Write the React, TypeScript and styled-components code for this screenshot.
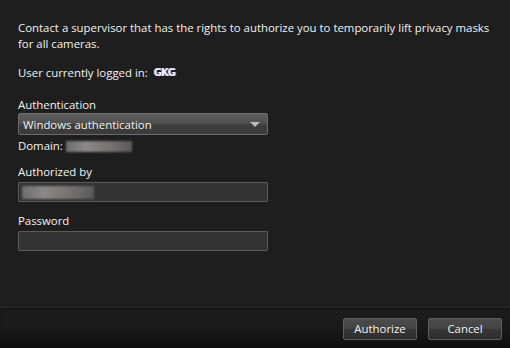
import React from 'react';
import styled, { createGlobalStyle } from 'styled-components';

const GlobalStyle = createGlobalStyle`
    html, body {
        margin: 0;
        padding: 0;
        background: #1e1e1e;
    }
    body {
        font-family: 'Open Sans', 'Noto Sans', 'Liberation Sans', sans-serif;
        font-size: 11.4px;
        color: #f2f2f2;
    }
`;

const Dialog = styled.div`
    width: 510px;
    height: 348px;
    display: flex;
    flex-direction: column;
    background: #1e1e1e;
    overflow: hidden;
`;

const Body = styled.div`
    flex: 1;
    display: flex;
    flex-direction: column;
    padding: 20px 18px 0 18px;
`;

const Intro = styled.p`
    margin: 0;
    line-height: 16px;
`;

const LoggedRow = styled.div`
    margin-top: 13px;
    line-height: 16px;
    display: flex;
    align-items: center;
    gap: 6px;
`;

const Scrambled = styled.span`
    font-family: 'DejaVu Sans', sans-serif;
    font-size: 10px;
    font-weight: bold;
    color: #f4f4ff;
    letter-spacing: -1px;
    text-shadow: 1px 0 0 rgba(110, 110, 255, 0.6), -1px 0 0 rgba(200, 140, 70, 0.5);
`;

const Field = styled.div<{ $top: number }>`
    margin-top: ${p => p.$top}px;
    display: flex;
    flex-direction: column;
`;

const Label = styled.label<{ $gap?: number }>`
    line-height: 16px;
    margin-bottom: ${p => p.$gap ?? 2}px;
`;

const Select = styled.div`
    box-sizing: border-box;
    width: 250px;
    height: 22px;
    border: 1px solid #6c6c6c;
    border-radius: 2px;
    background: linear-gradient(#5e5e5e 0%, #505050 45%, #3d3d3d 55%, #3a3a3a 100%);
    display: flex;
    align-items: center;
    justify-content: space-between;
    padding: 0 7px 0 4px;
`;

const Caret = styled.span`
    width: 0;
    height: 0;
    border-left: 5px solid transparent;
    border-right: 5px solid transparent;
    border-top: 5px solid #bcbcbc;
`;

const DomainRow = styled.div`
    margin-top: 3px;
    display: flex;
    align-items: center;
    gap: 3px;
    line-height: 16px;
`;

const Blur = styled.span<{ $w: number; $h: number }>`
    display: inline-block;
    width: ${p => p.$w}px;
    height: ${p => p.$h}px;
    background: linear-gradient(90deg, #6e6e6e, #8a8888 30%, #7a7676 60%, #5a5a5a);
    filter: blur(1px);
`;

const Input = styled.div`
    box-sizing: border-box;
    width: 250px;
    height: 20px;
    border: 1px solid #5a5a5a;
    border-radius: 1px;
    background: #333333;
    display: flex;
    align-items: center;
    padding-left: 3px;
`;

const Footer = styled.div`
    height: 40px;
    border-top: 1px solid #2e2e2e;
    box-shadow: inset 0 1px 1px #121212;
    background: linear-gradient(#1c1c1c 0%, #1a1a1a 50%, #0e0e0e 100%);
    display: flex;
    justify-content: flex-end;
    align-items: center;
    gap: 11px;
    padding: 0 8px 0 0;
`;

const Button = styled.button`
    box-sizing: border-box;
    width: 74px;
    height: 22px;
    border: 1px solid #5e5e5e;
    border-radius: 2px;
    background: linear-gradient(#4c4c4c 0%, #444 45%, #353535 55%, #2e2e2e 100%);
    color: #f2f2f2;
    font-family: 'Open Sans', 'Noto Sans', sans-serif;
    font-size: 11.4px;
    padding: 0;
    margin-top: 1px;
`;

export default function App() {
    return (
        <Dialog>
            <GlobalStyle />
            <Body>
                <Intro>
                    Contact a supervisor that has the rights to authorize you to temporarily lift privacy masks
                    <br />
                    for all cameras.
                </Intro>
                <LoggedRow>
                    User currently logged in:
                    <Scrambled>GKG</Scrambled>
                </LoggedRow>
                <Field $top={16}>
                    <Label $gap={0}>Authentication</Label>
                    <Select>
                        Windows authentication
                        <Caret />
                    </Select>
                </Field>
                <DomainRow>
                    Domain:
                    <Blur $w={66} $h={11} />
                </DomainRow>
                <Field $top={10}>
                    <Label>Authorized by</Label>
                    <Input>
                        <Blur $w={72} $h={13} />
                    </Input>
                </Field>
                <Field $top={11}>
                    <Label>Password</Label>
                    <Input />
                </Field>
            </Body>
            <Footer>
                <Button>Authorize</Button>
                <Button>Cancel</Button>
            </Footer>
        </Dialog>
    );
}
